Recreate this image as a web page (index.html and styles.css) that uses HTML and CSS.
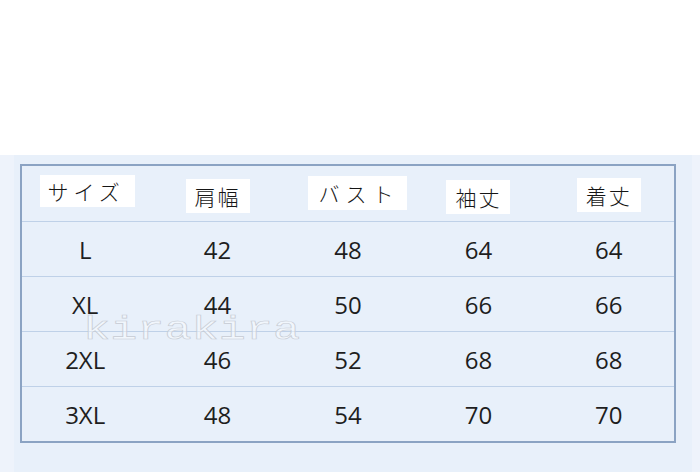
FILE: index.html
```html
<!DOCTYPE html>
<html lang="ja">
<head>
<meta charset="utf-8">
<title>サイズ表</title>
<link rel="stylesheet" href="styles.css">
</head>
<body>
<div class="top"></div>
<div class="sheet">
  <div class="table">
    <div class="row head">
      <div class="cell"><span class="label l1">サイズ</span></div>
      <div class="cell"><span class="label l2">肩幅</span></div>
      <div class="cell"><span class="label l3">バスト</span></div>
      <div class="cell"><span class="label l4">袖丈</span></div>
      <div class="cell"><span class="label l5">着丈</span></div>
    </div>
    <div class="row">
      <div class="cell size">L</div><div class="cell">42</div><div class="cell">48</div><div class="cell">64</div><div class="cell">64</div>
    </div>
    <div class="row">
      <div class="cell size">XL</div><div class="cell">44</div><div class="cell">50</div><div class="cell">66</div><div class="cell">66</div>
    </div>
    <div class="row">
      <div class="cell size">2XL</div><div class="cell">46</div><div class="cell">52</div><div class="cell">68</div><div class="cell">68</div>
    </div>
    <div class="row last">
      <div class="cell size">3XL</div><div class="cell">48</div><div class="cell">54</div><div class="cell">70</div><div class="cell">70</div>
    </div>
    <div class="watermark">kirakira</div>
  </div>
</div>
</body>
</html>
```
FILE: styles.css
```css
html, body {
  margin: 0;
  padding: 0;
  background: #ffffff;
}
body {
  width: 700px;
  height: 472px;
  overflow: hidden;
}
.top {
  height: 155px;
  background: #ffffff;
}
.sheet {
  height: 317px;
  box-sizing: border-box;
  padding: 9px 0 0 20px;
  background: linear-gradient(to right, #eef3fb 0, #eef3fb 14px, #e8f0fa 14px, #e8f0fa 692px, #eef3fb 692px);
}
.table {
  position: relative;
  width: 656px;
  box-sizing: border-box;
  border: 2px solid #8ba3c3;
  display: flex;
  flex-direction: column;
}
.row {
  display: grid;
  grid-template-columns: repeat(5, 1fr);
  height: 55px;
  border-bottom: 1px solid #bfd1e8;
  box-sizing: border-box;
}
.row.head {
  height: 56px;
}
.row.last {
  border-bottom: none;
  height: 54px;
}
.cell {
  display: flex;
  align-items: center;
  justify-content: center;
  font-family: "Open Sans", "Liberation Sans", sans-serif;
  font-size: 24px;
  color: #1e1e1e;
  padding-top: 1px;
}
.cell.size {
  padding-right: 4px;
}
.label {
  background: #ffffff;
  font-family: "Noto Sans CJK JP", sans-serif;
  font-weight: 300;
  font-size: 21px;
  line-height: 32px;
  color: #151515;
  padding: 0 8px;
  letter-spacing: 2px;
}
.l1 { margin-top: -6px; padding: 0 10px 0 8px; letter-spacing: 5px; }
.l2 { margin-top: 4px; padding: 1px 9px; }
.l3 { margin-top: -2px; margin-left: 20px; padding: 1px 8px 1px 10px; letter-spacing: 6px; }
.l4 { margin-top: 5px; padding: 1px 9px; }
.l5 { margin-top: 1px; padding: 1px 9px; }
.watermark {
  position: absolute;
  left: 61px;
  top: 148px;
  font-family: "Liberation Mono", monospace;
  font-size: 33px;
  line-height: 33px;
  color: rgba(250, 252, 255, 0.5);
  -webkit-text-stroke: 0.6px #c6cbd3;
  transform: scaleX(1.37);
  transform-origin: left top;
  pointer-events: none;
}
```
